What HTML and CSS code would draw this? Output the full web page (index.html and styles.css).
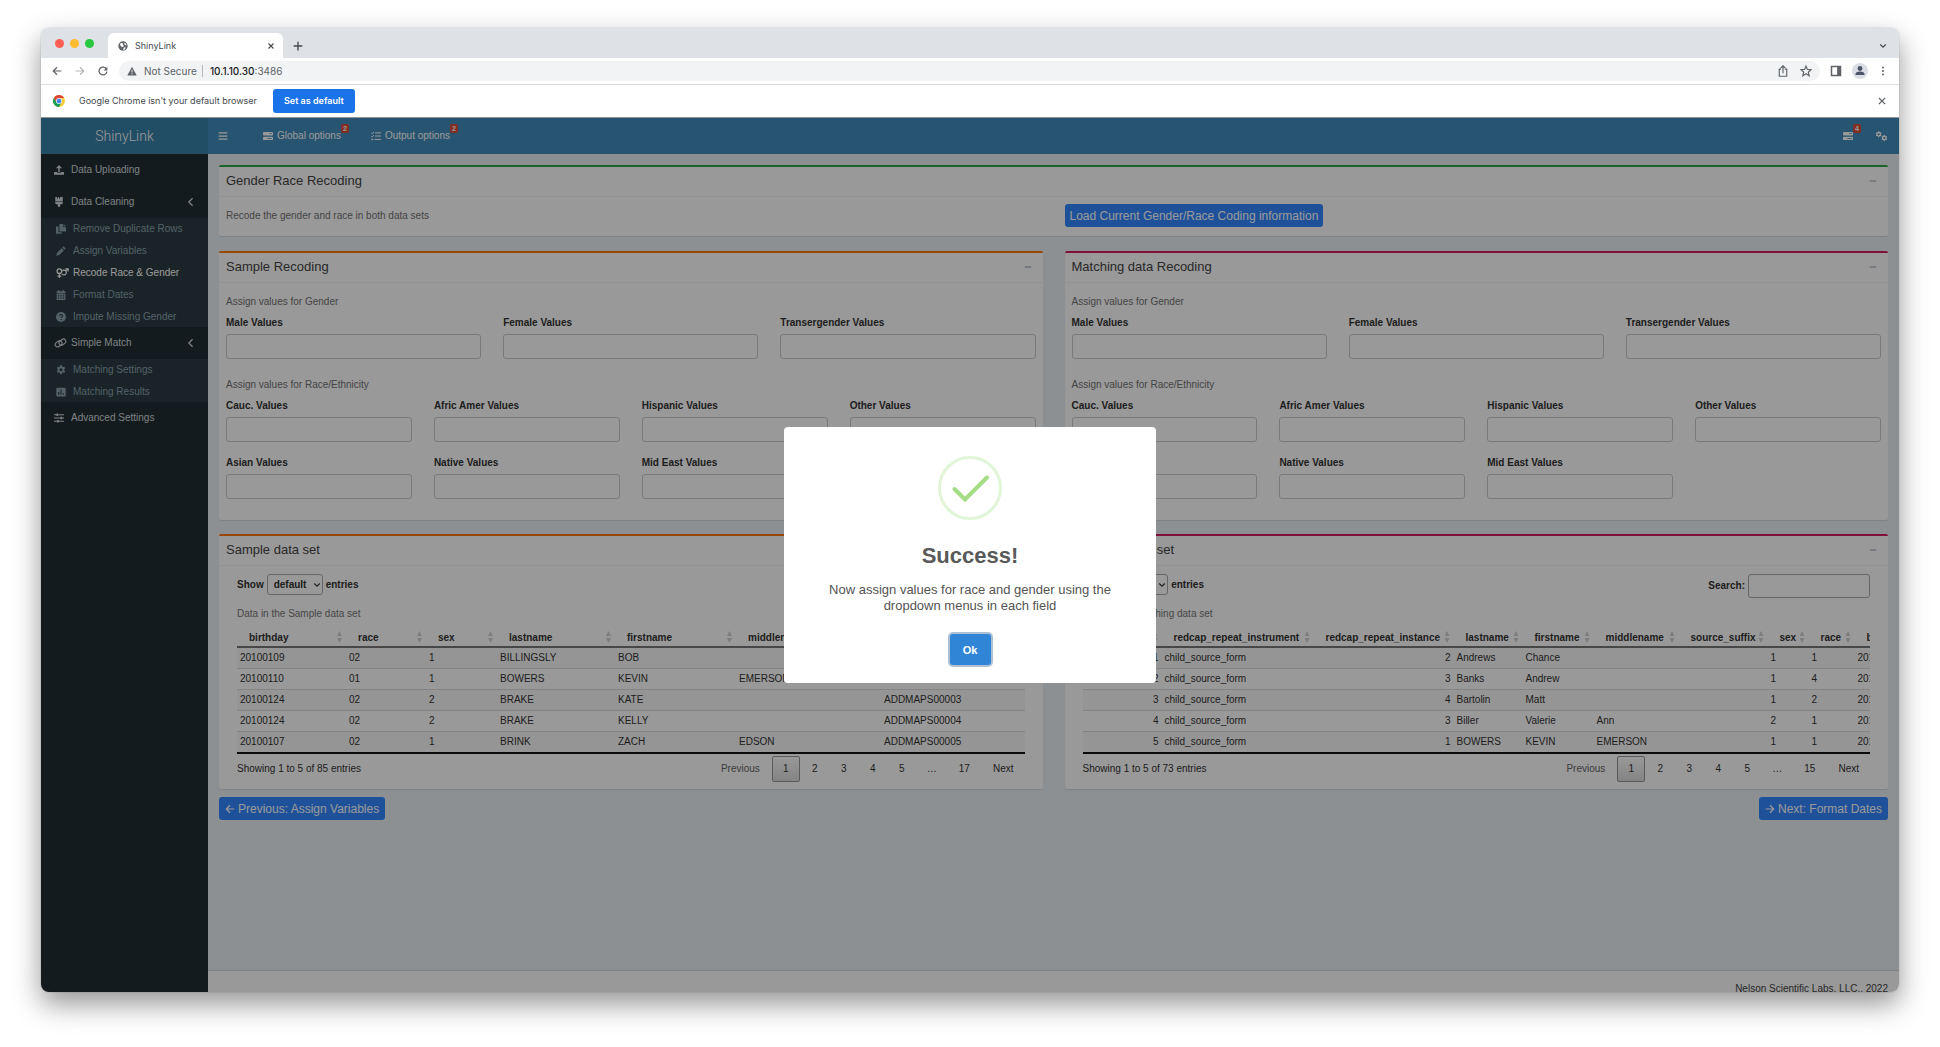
FILE: index.html
```html
<!DOCTYPE html>
<html lang="en">
<head>
<meta charset="utf-8">
<title>ShinyLink</title>
<link rel="stylesheet" href="styles.css">
</head>
<body>
<svg class="sprite" aria-hidden="true">
  <symbol id="i-globe" viewBox="0 0 16 16"><circle cx="8" cy="8" r="7.500" fill="#5f6368"/><path d="M3 4.500 6 3l2.500 1-1 2 2 1.500-1.500 2-2.500-.5L4 7.500zM10 2.500l3.500 2.500-.5 2-2.500-1zM9.500 10l3 .5-1.500 3-3 .5z" fill="#fff"/></symbol>
  <symbol id="i-x" viewBox="0 0 16 16"><path d="M3 3l10 10M13 3 3 13" fill="none" stroke="currentColor" stroke-width="2.200"/></symbol>
  <symbol id="i-plus" viewBox="0 0 16 16"><path d="M8 1v14M1 8h14" fill="none" stroke="currentColor" stroke-width="2.200"/></symbol>
  <symbol id="i-back" viewBox="0 0 16 16"><path d="M15 8H2M8 2 2 8l6 6" fill="none" stroke="currentColor" stroke-width="1.900"/></symbol>
  <symbol id="i-fwd" viewBox="0 0 16 16"><path d="M1 8h13M8 2l6 6-6 6" fill="none" stroke="currentColor" stroke-width="1.900"/></symbol>
  <symbol id="i-reload" viewBox="0 0 16 16"><path d="M13.500 5A6.300 6.300 0 1 0 14.200 9" fill="none" stroke="currentColor" stroke-width="2"/><path d="M15 1v6H9z" fill="currentColor"/></symbol>
  <symbol id="i-warn" viewBox="0 0 16 16"><path d="M8 1l7.500 14H.5z" fill="currentColor"/><path d="M8 6v4.500M8 11.800v1.700" stroke="#f1f3f4" stroke-width="1.500"/></symbol>
  <symbol id="i-share" viewBox="0 0 16 16"><path d="M5.500 5.500H3v9.500h10V5.500h-2.500M8 11V1.500M5 4l3-3 3 3" fill="none" stroke="currentColor" stroke-width="1.500"/></symbol>
  <symbol id="i-star" viewBox="0 0 16 16"><path d="M8 1.500l1.900 4.400 4.800.4-3.600 3.200 1.100 4.700L8 11.700l-4.200 2.500 1.100-4.700L1.300 6.300l4.800-.4z" fill="none" stroke="currentColor" stroke-width="1.600"/></symbol>
  <symbol id="i-panel" viewBox="0 0 16 16"><path d="M2 2h12v12H2z" fill="none" stroke="currentColor" stroke-width="2"/><path d="M9.500 2H14v12H9.500z" fill="currentColor"/></symbol>
  <symbol id="i-user" viewBox="0 0 16 16"><circle cx="8" cy="8" r="8" fill="#dadce6"/><circle cx="8" cy="5.500" r="2.400" fill="#4a5468"/><path d="M3.500 12V11c0-1.800 3-2.500 4.500-2.500s4.500.7 4.500 2.500v1z" fill="#4a5468"/></symbol>
  <symbol id="i-dots" viewBox="0 0 16 16"><g fill="currentColor"><circle cx="8" cy="2.500" r="1.600"/><circle cx="8" cy="8" r="1.600"/><circle cx="8" cy="13.500" r="1.600"/></g></symbol>
  <symbol id="i-down" viewBox="0 0 16 16"><path d="M2.500 5 8 10.500 13.500 5" fill="none" stroke="currentColor" stroke-width="2.200"/></symbol>
  <symbol id="i-left" viewBox="0 0 16 16"><path d="M10.500 2 4.500 8l6 6" fill="none" stroke="currentColor" stroke-width="2"/></symbol>
  <symbol id="i-minus" viewBox="0 0 16 16"><path d="M1.500 8h13" stroke="currentColor" stroke-width="2.200"/></symbol>
  <symbol id="i-chrome" viewBox="0 0 16 16"><circle cx="8" cy="8" r="8" fill="#ffcd40"/><path d="M1.100 4 4.600 10 8 8V4h6.900A8 8 0 0 0 1.100 4z" fill="#db4437"/><path d="M1.100 4A8 8 0 0 0 8 16l3.400-6H4.600z" fill="#0f9d58"/><circle cx="8" cy="8" r="4" fill="#f1f1f1"/><circle cx="8" cy="8" r="3.100" fill="#4285f4"/></symbol>
  <symbol id="i-bars" viewBox="0 0 16 16"><path d="M1 3h14M1 8h14M1 13h14" stroke="currentColor" stroke-width="2"/></symbol>
  <symbol id="i-server" viewBox="0 0 16 16"><path fill-rule="evenodd" d="M1.500 1.500h13A1.500 1.500 0 0 1 16 3v2.500A1.500 1.500 0 0 1 14.500 7h-13A1.500 1.500 0 0 1 0 5.500V3a1.500 1.500 0 0 1 1.500-1.500zM10 3.500v1.200h4V3.500zM1.500 9h13a1.500 1.500 0 0 1 1.500 1.500V13a1.500 1.500 0 0 1-1.500 1.500h-13A1.500 1.500 0 0 1 0 13v-2.500A1.500 1.500 0 0 1 1.500 9zM7 11.200v1.200h7v-1.200z" fill="currentColor"/></symbol>
  <symbol id="i-tasks" viewBox="0 0 16 16"><path d="M.5 3l1.500 1.500L4.500 1.500M.5 8l1.500 1.500L4.500 6.500M6.500 3H16M6.500 8H16M5.500 13.500H16" fill="none" stroke="currentColor" stroke-width="1.600"/><circle cx="2" cy="13.500" r="1.400" fill="currentColor"/></symbol>
  <symbol id="i-gear" viewBox="0 0 16 16"><path fill-rule="evenodd" d="M6.600.5h2.800l.5 2 1.400.8 2-.6 1.400 2.400-1.500 1.500v1.800l1.500 1.500-1.400 2.400-2-.6-1.400.8-.5 2H6.600l-.5-2-1.400-.8-2 .6L1.300 9.900l1.500-1.500V6.600L1.300 5.100l1.400-2.400 2 .6 1.400-.8zM8 5a2.500 2.500 0 1 0 0 5 2.500 2.500 0 0 0 0-5z" fill="currentColor"/></symbol>
  <symbol id="i-cogs" viewBox="0 0 20 16"><use href="#i-gear" x="0" y="0" width="11" height="11"/><use href="#i-gear" x="9" y="6" width="11" height="11"/></symbol>
  <symbol id="i-upload" viewBox="0 0 16 16"><path d="M8 0l5 5H9.200v6H6.800V5H3zM0 11h5v1.500h6V11h5v4.500H0z" fill="currentColor"/></symbol>
  <symbol id="i-brush" viewBox="0 0 16 16"><path d="M2 0h3v2.500h1.500V0H8v2.500h1.500V0H14v7H2zM2 8h12v1.500a2 2 0 0 1-2 2h-2V14a2 2 0 0 1-4 0v-2.500H4a2 2 0 0 1-2-2z" fill="currentColor"/></symbol>
  <symbol id="i-copy" viewBox="0 0 16 16"><path d="M0 4h4v9h5v2.500H0zM5.500 0H11v5h5v7H5.500zM12 0l4 4h-4z" fill="currentColor"/></symbol>
  <symbol id="i-pencil" viewBox="0 0 16 16"><path d="M12 .5 15.500 4l-2 2L10 2.500zM9 3.500 12.500 7l-7.500 7.500L.5 15.500 1.500 11z" fill="currentColor"/></symbol>
  <symbol id="i-gender" viewBox="0 0 20 16"><g fill="none" stroke="currentColor" stroke-width="1.900"><circle cx="5" cy="5" r="3.700"/><path d="M5 9v7M2 13h6M9.500 4.500a3.900 3.900 0 1 1-.5 5M15 4.500l3.500-3M14.500 1.200h4.500v4.500"/></g></symbol>
  <symbol id="i-cal" viewBox="0 0 16 16"><path fill-rule="evenodd" d="M3.500 0h2v2h5V0h2v2H15v3H1V2h2.500zM1 6h14v10H1zM3 7.500V9h2V7.500zm4 0V9h2V7.500zm4 0V9h2V7.500zM3 10.500V12h2v-1.500zm4 0V12h2v-1.500zm4 0V12h2v-1.500zM3 13.200v1.300h2v-1.300zm4 0v1.300h2v-1.300zm4 0v1.300h2v-1.300z" fill="currentColor"/></symbol>
  <symbol id="i-help" viewBox="0 0 16 16"><circle cx="8" cy="8" r="8" fill="currentColor"/><path d="M5.700 6.200C5.700 3.200 10.500 3.500 10.500 6c0 1.700-2.300 1.800-2.300 3.500M8.200 11v1.800" fill="none" stroke="#2c3b41" stroke-width="1.700"/></symbol>
  <symbol id="i-link" viewBox="0 0 20 16"><g fill="none" stroke="currentColor" stroke-width="1.800"><rect x="1" y="5.500" width="11.500" height="7.500" rx="3.750" transform="rotate(-35 7 9)"/><rect x="7.500" y="3" width="11.500" height="7.500" rx="3.750" transform="rotate(-35 13 7)"/></g></symbol>
  <symbol id="i-poll" viewBox="0 0 16 16"><path fill-rule="evenodd" d="M2 1h12a1.500 1.500 0 0 1 1.500 1.500v11A1.500 1.500 0 0 1 14 15H2a1.500 1.500 0 0 1-1.500-1.500v-11A1.500 1.500 0 0 1 2 1zM3.500 8v4.500h1.800V8zm3.600-4v8.500h1.800V4zm3.600 6v2.500h1.800V10z" fill="currentColor"/></symbol>
  <symbol id="i-sliders" viewBox="0 0 16 16"><path d="M0 2.800h16M0 8h16M0 13.200h16" stroke="currentColor" stroke-width="1.700"/><path d="M4 .8h2.500v4H4zM10.500 6H13v4h-2.500zM5 11.200h2.500v4H5z" fill="currentColor"/></symbol>
</svg>

<div class="window">
  <header class="chrome">
    <div class="tabstrip">
      <div class="lights"><i class="light-red"></i><i class="light-yellow"></i><i class="light-green"></i></div>
      <div class="tab"><svg class="icon"><use href="#i-globe"/></svg><span class="tab-title">ShinyLink</span><button class="bare" type="button" aria-label="Close tab"><svg class="icon-s"><use href="#i-x"/></svg></button></div>
      <button class="bare new-tab" type="button" aria-label="New tab"><svg class="icon"><use href="#i-plus"/></svg></button>
      <button class="bare tab-list" type="button" aria-label="Search tabs"><svg class="icon-s"><use href="#i-down"/></svg></button>
    </div>
    <div class="toolbar">
      <div class="nav-buttons">
        <button class="bare" type="button" aria-label="Back"><svg class="icon"><use href="#i-back"/></svg></button>
        <button class="bare off" type="button" aria-label="Forward"><svg class="icon"><use href="#i-fwd"/></svg></button>
        <button class="bare" type="button" aria-label="Reload"><svg class="icon"><use href="#i-reload"/></svg></button>
      </div>
      <div class="omnibox">
        <svg class="icon"><use href="#i-warn"/></svg>
        <span class="security">Not Secure</span>
        <span class="url"><b>10.1.10.30</b>:3486</span>
        <span class="omni-actions">
          <button class="bare" type="button" aria-label="Share"><svg class="icon-l"><use href="#i-share"/></svg></button>
          <button class="bare" type="button" aria-label="Bookmark"><svg class="icon-l"><use href="#i-star"/></svg></button>
        </span>
      </div>
      <div class="tool-actions">
        <button class="bare" type="button" aria-label="Side panel"><svg class="icon-l"><use href="#i-panel"/></svg></button>
        <button class="bare" type="button" aria-label="Profile"><svg class="icon-xl"><use href="#i-user"/></svg></button>
        <button class="bare" type="button" aria-label="Menu"><svg class="icon"><use href="#i-dots"/></svg></button>
      </div>
    </div>
    <div class="infobar">
      <svg class="icon-l"><use href="#i-chrome"/></svg>
      <span>Google Chrome isn't your default browser</span>
      <button class="set-default" type="button">Set as default</button>
      <button class="bare dismiss" type="button" aria-label="Dismiss"><svg class="icon"><use href="#i-x"/></svg></button>
    </div>
  </header>

  <div class="app">
    <header class="topbar">
      <a class="logo" href="#">ShinyLink</a>
      <nav class="topnav">
        <button class="bare burger" type="button" aria-label="Toggle navigation"><svg class="icon"><use href="#i-bars"/></svg></button>
        <a class="toplink" href="#"><svg class="icon"><use href="#i-server"/></svg>Global options<span class="badge">2</span></a>
        <a class="toplink" href="#"><svg class="icon"><use href="#i-tasks"/></svg>Output options<span class="badge">2</span></a>
        <span class="top-right">
          <a class="toplink" href="#" aria-label="Tasks"><svg class="icon"><use href="#i-server"/></svg><span class="badge">4</span></a>
          <a class="toplink" href="#" aria-label="Settings"><svg class="icon-w"><use href="#i-cogs"/></svg></a>
        </span>
      </nav>
    </header>

    <div class="layout">
      <nav class="sidebar">
        <a class="menu" href="#"><svg class="icon"><use href="#i-upload"/></svg>Data Uploading</a>
        <a class="menu" href="#"><svg class="icon"><use href="#i-brush"/></svg>Data Cleaning<svg class="icon chevron"><use href="#i-left"/></svg></a>
        <div class="submenu">
          <a href="#"><svg class="icon"><use href="#i-copy"/></svg>Remove Duplicate Rows</a>
          <a href="#"><svg class="icon"><use href="#i-pencil"/></svg>Assign Variables</a>
          <a class="active" href="#"><svg class="icon-w"><use href="#i-gender"/></svg>Recode Race &amp; Gender</a>
          <a href="#"><svg class="icon"><use href="#i-cal"/></svg>Format Dates</a>
          <a href="#"><svg class="icon"><use href="#i-help"/></svg>Impute Missing Gender</a>
        </div>
        <a class="menu" href="#"><svg class="icon-w"><use href="#i-link"/></svg>Simple Match<svg class="icon chevron"><use href="#i-left"/></svg></a>
        <div class="submenu">
          <a href="#"><svg class="icon"><use href="#i-gear"/></svg>Matching Settings</a>
          <a href="#"><svg class="icon"><use href="#i-poll"/></svg>Matching Results</a>
        </div>
        <a class="menu" href="#"><svg class="icon"><use href="#i-sliders"/></svg>Advanced Settings</a>
      </nav>

      <div class="page">
        <main class="content">
          <section class="box green">
            <div class="box-head"><h2>Gender Race Recoding</h2><button class="bare collapse" type="button" aria-label="Collapse"><svg class="icon-s"><use href="#i-minus"/></svg></button></div>
            <div class="intro"><p>Recode the gender and race in both data sets</p><div><button class="primary" type="button">Load Current Gender/Race Coding information</button></div></div>
          </section>

          <div class="columns">
            <section class="box orange">
              <div class="box-head"><h2>Sample Recoding</h2><button class="bare collapse" type="button" aria-label="Collapse"><svg class="icon-s"><use href="#i-minus"/></svg></button></div>
              <form class="recode">
                <p>Assign values for Gender</p>
                <div class="thirds">
                  <label>Male Values<input type="text"></label>
                  <label>Female Values<input type="text"></label>
                  <label>Transergender Values<input type="text"></label>
                </div>
                <p>Assign values for Race/Ethnicity</p>
                <div class="quarters">
                  <label>Cauc. Values<input type="text"></label>
                  <label>Afric Amer Values<input type="text"></label>
                  <label>Hispanic Values<input type="text"></label>
                  <label>Other Values<input type="text"></label>
                  <label>Asian Values<input type="text"></label>
                  <label>Native Values<input type="text"></label>
                  <label>Mid East Values<input type="text"></label>
                </div>
              </form>
            </section>
            <section class="box red">
              <div class="box-head"><h2>Matching data Recoding</h2><button class="bare collapse" type="button" aria-label="Collapse"><svg class="icon-s"><use href="#i-minus"/></svg></button></div>
              <form class="recode">
                <p>Assign values for Gender</p>
                <div class="thirds">
                  <label>Male Values<input type="text"></label>
                  <label>Female Values<input type="text"></label>
                  <label>Transergender Values<input type="text"></label>
                </div>
                <p>Assign values for Race/Ethnicity</p>
                <div class="quarters">
                  <label>Cauc. Values<input type="text"></label>
                  <label>Afric Amer Values<input type="text"></label>
                  <label>Hispanic Values<input type="text"></label>
                  <label>Other Values<input type="text"></label>
                  <label>Asian Values<input type="text"></label>
                  <label>Native Values<input type="text"></label>
                  <label>Mid East Values<input type="text"></label>
                </div>
              </form>
            </section>

            <section class="box orange">
              <div class="box-head"><h2>Sample data set</h2><button class="bare collapse" type="button" aria-label="Collapse"><svg class="icon-s"><use href="#i-minus"/></svg></button></div>
              <div class="data">
                <div class="controls">
                  <label class="length">Show <span class="select"><select><option>default</option></select><svg class="icon-s"><use href="#i-down"/></svg></span> entries</label>
                  <label class="search">Search:<input type="search"></label>
                </div>
                <div class="scroller">
                  <table class="sample">
                    <caption>Data in the Sample data set</caption>
                    <colgroup><col class="w109"><col class="w80"><col class="w71"><col class="w118"><col class="w121"><col class="w145"><col></colgroup>
                    <thead><tr><th>birthday</th><th>race</th><th>sex</th><th>lastname</th><th>firstname</th><th>middlename</th><th>source_id</th></tr></thead>
                    <tbody>
                      <tr><td>20100109</td><td>02</td><td>1</td><td>BILLINGSLY</td><td>BOB</td><td></td><td>ADDMAPS00001</td></tr>
                      <tr><td>20100110</td><td>01</td><td>1</td><td>BOWERS</td><td>KEVIN</td><td>EMERSON</td><td>ADDMAPS00002</td></tr>
                      <tr><td>20100124</td><td>02</td><td>2</td><td>BRAKE</td><td>KATE</td><td></td><td>ADDMAPS00003</td></tr>
                      <tr><td>20100124</td><td>02</td><td>2</td><td>BRAKE</td><td>KELLY</td><td></td><td>ADDMAPS00004</td></tr>
                      <tr><td>20100107</td><td>02</td><td>1</td><td>BRINK</td><td>ZACH</td><td>EDSON</td><td>ADDMAPS00005</td></tr>
                    </tbody>
                  </table>
                </div>
                <div class="table-foot">
                  <span>Showing 1 to 5 of 85 entries</span>
                  <nav class="pager"><a class="muted" href="#">Previous</a><a class="current" href="#">1</a><a href="#">2</a><a href="#">3</a><a href="#">4</a><a href="#">5</a><span>…</span><a href="#">17</a><a href="#">Next</a></nav>
                </div>
              </div>
            </section>

            <section class="box red">
              <div class="box-head"><h2>Matching data set</h2><button class="bare collapse" type="button" aria-label="Collapse"><svg class="icon-s"><use href="#i-minus"/></svg></button></div>
              <div class="data">
                <div class="controls">
                  <label class="length">Show <span class="select"><select><option>default</option></select><svg class="icon-s"><use href="#i-down"/></svg></span> entries</label>
                  <label class="search">Search:<input type="search"></label>
                </div>
                <div class="scroller">
                  <table class="matching">
                    <caption>Data in the Matching data set</caption>
                    <colgroup><col class="w79"><col class="w152"><col class="w140"><col class="w69"><col class="w71"><col class="w85"><col class="w89"><col class="w41"><col class="w46"><col class="w109"></colgroup>
                    <thead><tr><th>record_id</th><th>redcap_repeat_instrument</th><th>redcap_repeat_instance</th><th>lastname</th><th>firstname</th><th>middlename</th><th>source_suffix</th><th>sex</th><th>race</th><th>birthday</th></tr></thead>
                    <tbody>
                      <tr><td class="num">1</td><td>child_source_form</td><td class="num">2</td><td>Andrews</td><td>Chance</td><td></td><td></td><td>1</td><td>1</td><td>20100109</td></tr>
                      <tr><td class="num">2</td><td>child_source_form</td><td class="num">3</td><td>Banks</td><td>Andrew</td><td></td><td></td><td>1</td><td>4</td><td>20110110</td></tr>
                      <tr><td class="num">3</td><td>child_source_form</td><td class="num">4</td><td>Bartolin</td><td>Matt</td><td></td><td></td><td>1</td><td>2</td><td>20100124</td></tr>
                      <tr><td class="num">4</td><td>child_source_form</td><td class="num">3</td><td>Biller</td><td>Valerie</td><td>Ann</td><td></td><td>2</td><td>1</td><td>20100124</td></tr>
                      <tr><td class="num">5</td><td>child_source_form</td><td class="num">1</td><td>BOWERS</td><td>KEVIN</td><td>EMERSON</td><td></td><td>1</td><td>1</td><td>20100107</td></tr>
                    </tbody>
                  </table>
                </div>
                <div class="table-foot">
                  <span>Showing 1 to 5 of 73 entries</span>
                  <nav class="pager"><a class="muted" href="#">Previous</a><a class="current" href="#">1</a><a href="#">2</a><a href="#">3</a><a href="#">4</a><a href="#">5</a><span>…</span><a href="#">15</a><a href="#">Next</a></nav>
                </div>
              </div>
            </section>
          </div>

          <div class="steps">
            <button class="primary" type="button"><svg class="icon"><use href="#i-back"/></svg>Previous: Assign Variables</button>
            <button class="primary" type="button"><svg class="icon"><use href="#i-fwd"/></svg>Next: Format Dates</button>
          </div>
        </main>
        <footer class="footer">Nelson Scientific Labs, LLC., 2022</footer>
      </div>
    </div>

    <div class="overlay">
      <div class="dialog" role="dialog" aria-labelledby="dialog-title">
        <svg class="check" viewBox="0 0 64 64" aria-hidden="true"><circle cx="32" cy="32" r="30.500" fill="none" stroke="#e1f5d8" stroke-width="3"/><path d="M16.500 33 27 43.500 49 21.500" fill="none" stroke="#a5dc86" stroke-width="4" stroke-linecap="round"/></svg>
        <h1 id="dialog-title">Success!</h1>
        <p>Now assign values for race and gender using the dropdown menus in each field</p>
        <button class="ok" type="button">Ok</button>
      </div>
    </div>
  </div>
</div>
</body>
</html>
```

FILE: styles.css
```css
* { box-sizing: border-box; }

body {
  margin: 0;
  height: 100vh;
  padding: 28px 41px 55px;
  display: flex;
  background: #fff;
  font: 10px/14px "Liberation Sans", Arial, sans-serif;
  color: #333;
}

h1, h2, p { margin: 0; }
a { color: inherit; text-decoration: none; }
button, input, select { font: inherit; color: inherit; }
.sprite { display: none; }
.bare { display: flex; padding: 0; border: 0; background: none; }

.icon { width: 10px; height: 10px; flex: none; }
.icon-s { width: 8px; height: 8px; flex: none; }
.icon-l { width: 12px; height: 12px; flex: none; }
.icon-xl { width: 16px; height: 16px; flex: none; }
.icon-w { width: 13px; height: 10px; flex: none; }

/* Browser window */
.window {
  flex: 1;
  min-width: 0;
  display: flex;
  flex-direction: column;
  overflow: hidden;
  border-radius: 8px;
  box-shadow: 0 0 1px rgba(0, 0, 0, .5), 0 12px 28px rgba(0, 0, 0, .42);
}
.chrome { flex: none; font-family: Inter, sans-serif; font-size: 9px; color: #45494d; background: #fff; }

.tabstrip { display: flex; align-items: center; height: 30px; padding: 5px 12px 0 14px; background: #dee1e6; }
.lights { display: flex; gap: 6px; width: 53px; padding-bottom: 5px; }
.lights i { width: 9px; height: 9px; border-radius: 50%; }
.light-red { background: #ff5f57; }
.light-yellow { background: #febc2e; }
.light-green { background: #28c840; }
.tab { display: flex; align-items: center; gap: 7px; width: 175px; height: 25px; padding: 0 8px 0 10px; background: #fff; border-radius: 6px 6px 0 0; }
.tab-title { flex: 1; }
.new-tab { margin-left: 10px; }
.tab-list { margin-left: auto; }

.toolbar { display: flex; align-items: center; height: 27px; padding: 0 11px; border-bottom: 1px solid #dcdee0; color: #5f6368; }
.nav-buttons { display: flex; gap: 13px; width: 67px; }
.off { color: #b4b7ba; }
.omnibox { flex: 1; display: flex; align-items: center; height: 20px; padding: 0 8px; border-radius: 10px; background: #f1f3f4; font-size: 10px; }
.security { margin-left: 7px; padding-right: 5px; border-right: 1px solid #b8bbbe; line-height: 12px; }
.url { margin-left: 7px; }
.url b { font-weight: 500; color: #202124; }
.omni-actions { display: flex; gap: 11px; margin-left: auto; }
.tool-actions { display: flex; align-items: center; gap: 14px; padding-left: 10px; }
.tool-actions .icon-xl { margin: 0 -4px; }

.infobar { display: flex; align-items: center; height: 33px; padding: 0 12px; border-bottom: 1px solid #8d9498; }
.infobar > span { margin: 0 16px 0 14px; }
.set-default { height: 24px; padding: 0 11px; border: 0; border-radius: 3px; background: #1a73e8; color: #fff; font-weight: 600; }
.dismiss { margin-left: auto; color: #5f6368; }

/* Dashboard */
.app { position: relative; flex: 1; min-height: 0; overflow: hidden; background: #ecf0f5; }
.topbar { display: flex; height: 36px; color: #fff; background: #418cbb; }
.logo { width: 167px; background: #3780a8; text-align: center; font: 300 14px/36px Roboto, sans-serif; }
.topnav { flex: 1; display: flex; align-items: center; padding: 0 11px 0 10px; }
.burger { width: 45px; }
.toplink { position: relative; display: flex; align-items: center; gap: 4px; margin-right: 30px; }
.badge {
  position: absolute;
  left: 100%;
  top: -5px;
  width: 8px;
  height: 9px;
  border-radius: 2px;
  background: #dd4b39;
  font: bold 7px/9px "Liberation Sans", Arial, sans-serif;
  text-align: center;
}
.top-right { display: flex; margin-left: auto; gap: 22px; }
.top-right .toplink { margin: 0; height: 14px; }

.layout { display: flex; min-height: 100%; }
.sidebar { width: 167px; flex: none; background: #222d32; color: #b8c7ce; }
.menu { display: flex; align-items: center; gap: 7px; height: 32px; padding: 0 12px 0 13px; color: #d0d9dd; }
.menu .icon-w { margin-right: -3px; }
.chevron { margin-left: auto; }
.submenu { display: grid; gap: 1px; background: #2c3b41; color: #8aa4af; }
.submenu a { display: flex; align-items: center; gap: 7px; height: 21px; padding-left: 15px; }
.submenu .icon-w { margin-right: -3px; }
.submenu .active { color: #fff; }

.page { flex: 1; min-width: 0; }
.content { min-height: calc(100vh - 231px); padding: 11px; }
.box { border-top: 2px solid; border-radius: 2px; background: #fff; box-shadow: 0 1px 1px rgba(0, 0, 0, .1); }
.green { border-color: #28a745; margin-bottom: 15px; }
.orange { border-color: #ff7701; }
.red { border-color: #d81b60; }
.box-head { display: flex; align-items: center; justify-content: space-between; height: 30px; padding: 0 11px 2px 7px; border-bottom: 1px solid #f4f4f4; }
.box-head h2 { font-size: 13px; font-weight: 400; line-height: 16px; color: #444; }
.collapse { color: #97a0b3; }
.columns { display: grid; grid-template-columns: 1fr 1fr; gap: 14px 22px; }
.columns > * { min-width: 0; }

.intro { display: grid; grid-template-columns: 1fr 1fr; gap: 22px; align-items: center; padding: 7px 7px 9px; color: #737373; }
.primary { display: inline-flex; align-items: center; gap: 3px; height: 23px; padding: 0 5px; border: 0; border-radius: 3px; background: #3388ff; color: #fff; font-size: 12px; }

.recode { padding: 12px 7px 21px; }
.recode p { margin-bottom: 7px; color: #737373; }
.thirds, .quarters { display: grid; gap: 14px 22px; }
.thirds { grid-template-columns: repeat(3, 1fr); margin-bottom: 19px; }
.quarters { grid-template-columns: repeat(4, 1fr); }
label { font-weight: 700; }
.recode input { display: block; width: 100%; height: 25px; margin-top: 4px; }
input, select { border: 1px solid #ccc; border-radius: 3px; background: #fff; outline: 0; }

.data { padding: 8px 18px 7px; }
.controls { display: flex; justify-content: space-between; align-items: flex-start; height: 33px; }
.length, .search { display: flex; align-items: center; gap: 3px; }
.select { display: grid; align-items: center; justify-items: end; }
.select > * { grid-area: 1 / 1; }
.select svg { margin-right: 2px; }
.select select { appearance: none; height: 21px; width: 56px; padding: 0 6px; border-color: #aaa; }
.search input { width: 122px; height: 24px; border-color: #aaa; }
.scroller { overflow: hidden; }
table { table-layout: fixed; border-collapse: separate; border-spacing: 0; border-bottom: 2px solid #111; }
.sample { width: 100%; }
.matching { width: 881px; }
caption { height: 19px; text-align: left; color: #777; white-space: nowrap; }
th { position: relative; height: 22px; padding: 3px 3px 0 12px; text-align: left; border-bottom: 2px solid #777; white-space: nowrap; }
th::after {
  content: "";
  position: absolute;
  top: 5px;
  right: 4px;
  width: 5px;
  height: 12px;
  background: #d0d0d0;
  clip-path: polygon(50% 0, 100% 42%, 0 42%, 0 58%, 100% 58%, 50% 100%, 0 58%, 0 42%);
}
td { height: 21px; padding: 0 3px; border-top: 1px solid #ddd; white-space: nowrap; }
tbody tr:first-child td { height: 20px; border-top: 0; }
tbody tr:nth-child(odd) { background: #f9f9f9; }
.num { text-align: right; }
.w41 { width: 41px; }
.w46 { width: 46px; }
.w69 { width: 69px; }
.w71 { width: 71px; }
.w79 { width: 79px; }
.w80 { width: 80px; }
.w85 { width: 85px; }
.w89 { width: 89px; }
.w109 { width: 109px; }
.w118 { width: 118px; }
.w121 { width: 121px; }
.w140 { width: 140px; }
.w145 { width: 145px; }
.w152 { width: 152px; }

.table-foot { display: flex; justify-content: space-between; align-items: center; padding-top: 2px; }
.pager { display: flex; gap: 1px; }
.pager > * { height: 26px; min-width: 28px; padding: 0 10px; border: 1px solid transparent; border-radius: 2px; line-height: 24px; text-align: center; }
.pager .muted { color: #666; }
.pager .current { border-color: #979797; background: linear-gradient(#fff, #dcdcdc); }
.pager span { padding: 0 9px; }

.steps { display: flex; justify-content: space-between; margin-top: 8px; }
.steps .primary { padding: 0 6px; }
.footer { height: 40px; padding: 11px; border-top: 1px solid #d2d6de; background: #fff; text-align: right; color: #444; }

/* Alert */
.overlay { position: absolute; inset: 0; display: flex; align-items: center; justify-content: center; background: rgba(0, 0, 0, .4); }
.dialog { display: flex; flex-direction: column; align-items: center; width: 372px; padding: 29px 40px 18px; border-radius: 4px; background: #fff; color: #545454; text-align: center; }
.check { width: 64px; height: 64px; }
.dialog h1 { margin: 22px 0 12px; font-size: 22px; line-height: 28px; color: #595959; }
.dialog p { font-size: 13px; line-height: 16px; }
.ok { width: 41px; height: 31px; margin-top: 20px; border: 0; border-radius: 3px; background: #3085d6; color: #fff; font-size: 11px; font-weight: 700; box-shadow: 0 0 0 2px rgba(50, 100, 150, .4); }
```
